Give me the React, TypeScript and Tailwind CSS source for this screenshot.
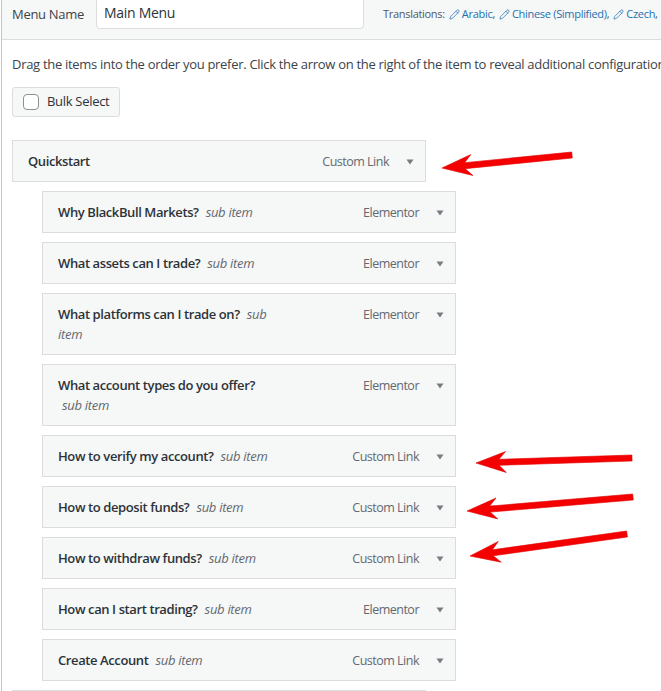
import { Pencil } from 'lucide-react';
import type { ReactNode } from 'react';

type MenuItemProps = {
  title?: ReactNode;
  type?: string;
  sub?: boolean;
};

function Caret() {
  return (
    <svg width="8" height="6" viewBox="0 0 8 6" className="ml-[17px] shrink-0">
      <polygon points="0.5,0.5 7.5,0.5 4,5.5" fill="#787c82" />
    </svg>
  );
}

function MenuItem({ title, type, sub }: MenuItemProps) {
  return (
    <div
      className={`box-border flex h-auto min-h-[42px] w-[414px] items-start border border-[#dcdcde] bg-[#f6f7f7] py-[10px] pl-[15px] pr-[11px] text-[13px] leading-[20px] ${
        sub ? 'ml-[30px]' : ''
      }`}
    >
      {title && <div className="whitespace-nowrap font-semibold leading-[20px] tracking-[-0.4px] text-[#2c3338]">{title}</div>}
      {type && (
        <div className="ml-auto flex h-[20px] items-center pt-px text-[12.5px] leading-[20px] tracking-[-0.5px] text-[#646970]">
          <span>{type}</span>
          <Caret />
        </div>
      )}
    </div>
  );
}

function SubLabel({ children = 'sub item', className = 'ml-[7px]' }: { children?: ReactNode; className?: string }) {
  return <span className={`font-normal italic tracking-[-0.3px] text-[#646970] ${className}`}>{children}</span>;
}

// hand-drawn style red arrow, tip points at the item
function RedArrow({ tail, tip }: { tail: [number, number]; tip: [number, number] }) {
  const dx = tip[0] - tail[0];
  const dy = tip[1] - tail[1];
  const len = Math.hypot(dx, dy);
  const ux = dx / len;
  const uy = dy / len;
  const nx = -uy;
  const ny = ux;
  const shaft = 3;
  const head = 10.5;
  const back = 30;
  const neck = 23;
  const p = (x: number, y: number) => `${x.toFixed(1)},${y.toFixed(1)}`;
  const bx = tip[0] - ux * back;
  const by = tip[1] - uy * back;
  const kx = tip[0] - ux * neck;
  const ky = tip[1] - uy * neck;
  const pts = [
    p(tail[0] + nx * shaft, tail[1] + ny * shaft),
    p(kx + nx * shaft, ky + ny * shaft),
    p(bx + nx * head, by + ny * head),
    p(tip[0], tip[1]),
    p(bx - nx * head, by - ny * head),
    p(kx - nx * shaft, ky - ny * shaft),
    p(tail[0] - nx * shaft, tail[1] - ny * shaft),
  ].join(' ');
  return <polygon points={pts} fill="#f40000" stroke="#e00000" strokeWidth="0.6" strokeLinejoin="round" />;
}

export default function App() {
  const subItems: { title: ReactNode; type: string }[] = [
    { title: <>Why BlackBull Markets?<SubLabel /></>, type: 'Elementor' },
    { title: <>What assets can I trade?<SubLabel /></>, type: 'Elementor' },
    {
      title: (
        <>
          What platforms can I trade on?<SubLabel>sub</SubLabel>
          <br />
          <SubLabel className="">item</SubLabel>
        </>
      ),
      type: 'Elementor',
    },
    {
      title: (
        <>
          What account types do you offer?
          <br />
          <SubLabel className="ml-[4px]" />
        </>
      ),
      type: 'Elementor',
    },
    { title: <>How to verify my account?<SubLabel /></>, type: 'Custom Link' },
    { title: <>How to deposit funds?<SubLabel /></>, type: 'Custom Link' },
    { title: <>How to withdraw funds?<SubLabel /></>, type: 'Custom Link' },
    { title: <>How can I start trading?<SubLabel /></>, type: 'Elementor' },
    { title: <>Create Account<SubLabel /></>, type: 'Custom Link' },
  ];

  return (
    <div className="relative h-[691px] w-full overflow-hidden bg-white font-['Open_Sans','Noto_Sans',sans-serif] text-[#3c434a]">
      <div className="ml-px h-full border-l border-[#c3c4c7]">
        {/* Menu name header */}
        <div className="box-border flex h-[40px] items-start border-b border-[#dcdcde] bg-[#f6f7f7]">
          <div className="w-[94px] shrink-0 whitespace-nowrap pl-[10px] pt-[4px] text-[13px] leading-[20px] tracking-[-0.3px] text-[#3c434a]">
            Menu Name
          </div>
          <div className="-mt-[4px] box-border h-[33px] w-[268px] shrink-0 rounded-b-[4px] border border-[#dcdcde] bg-white pl-[7px] pt-[6px] text-[14px] leading-[20px] tracking-[-0.3px] text-[#2c3338]">
            Main Menu
          </div>
          <div className="ml-[19px] flex items-center whitespace-nowrap pt-[6px] text-[11px] leading-[16px] tracking-[-0.3px] text-[#50575e]">
            Translations:
            {['Arabic', 'Chinese (Simplified)', 'Czech'].map(lang => (
              <span key={lang} className="flex items-center">
                <Pencil className="ml-[4px] mr-[2px] h-[11px] w-[11px] text-[#2271b1]" strokeWidth={1.6} />
                <span className="text-[#2271b1]">{lang}</span>
                <span>,</span>
              </span>
            ))}
          </div>
        </div>

        {/* Body */}
        <div className="pl-[10px]">
          <p className="mt-[14px] whitespace-nowrap text-[13px] leading-[20px] tracking-[-0.3px]">
            Drag the items into the order you prefer. Click the arrow on the right of the item to reveal additional configuration options.
          </p>

          <div className="mt-[13px] box-border flex h-[30px] w-[108px] items-center gap-[8px] rounded-[3px] border border-[#dcdcde] bg-[#f6f7f7] pl-[10px] text-[13px] tracking-[-0.3px] text-[#2c3338]">
            <span className="box-border h-[16px] w-[16px] rounded-[4px] border border-[#8c8f94] bg-white" />
            Bulk Select
          </div>

          <div className="mt-[23px] flex flex-col gap-[9px]">
            <MenuItem title="Quickstart" type="Custom Link" />
            {subItems.map((item, i) => (
              <MenuItem key={i} title={item.title} type={item.type} sub />
            ))}
            {/* next top-level item, only its top edge is in view */}
            <MenuItem />
          </div>
        </div>
      </div>

      {/* annotations */}
      <svg className="pointer-events-none absolute left-0 top-0" width="661" height="691">
        <RedArrow tail={[572, 155]} tip={[442, 168]} />
        <RedArrow tail={[632, 458]} tip={[476, 463]} />
        <RedArrow tail={[633, 497]} tip={[467, 511]} />
        <RedArrow tail={[627, 534]} tip={[470, 556]} />
      </svg>
    </div>
  );
}
